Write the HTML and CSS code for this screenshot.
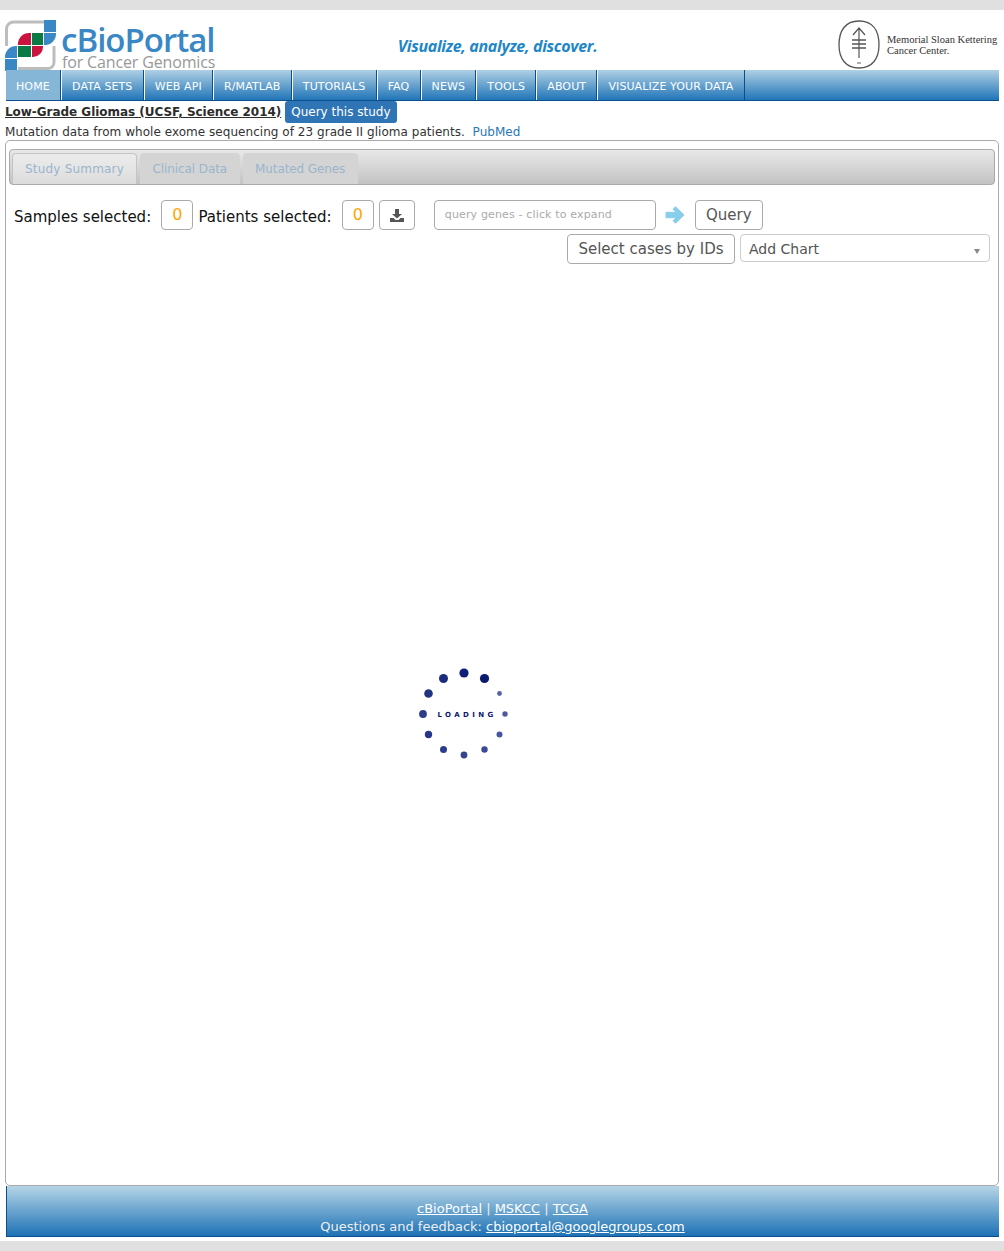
FILE: index.html
```html
<!DOCTYPE html>
<html lang="en">
<head>
    <meta charset="UTF-8">
    <meta name="viewport" content="width=device-width, initial-scale=1.0">
    <title>cBioPortal for Cancer Genomics</title>
    <link rel="stylesheet" href="styles.css">
</head>
<body>
<div class="page">
    <header class="header">
        <a class="logo" href="#">
            <svg class="logo-mark" width="52" height="52" viewBox="0 0 52 52">
                <path d="M1.5 26V9a7 7 0 0 1 7-7H39" fill="none" stroke="#bdbdbd" stroke-width="3"/>
                <path d="M13 48.500H43a6 6 0 0 0 6-6V26" fill="none" stroke="#bdbdbd" stroke-width="3"/>
                <rect x="39" y="0" width="12" height="12" fill="#3a87c6"/>
                <rect x="0" y="39" width="12" height="12" fill="#3a87c6"/>
                <path d="M39 13H51V14A11 11 0 0 1 40 25H39Z" fill="#3a87c6"/>
                <path d="M12 26V38H0V37A11 11 0 0 1 11 26Z" fill="#3a87c6"/>
                <path d="M26 13V25H13V24A11 11 0 0 1 24 13Z" fill="#c9143f"/>
                <rect x="27" y="13" width="11" height="12" fill="#0b7b45"/>
                <rect x="13" y="26" width="13" height="11" fill="#0b7b45"/>
                <path d="M27 26H38V27A10 10 0 0 1 28 37H27Z" fill="#c9143f"/>
            </svg>
            <span class="logo-text">
                <span class="logo-name">cBioPortal</span>
                <span class="logo-sub">for Cancer Genomics</span>
            </span>
        </a>
        <div class="tagline">Visualize, analyze, discover.</div>
        <div class="msk">
            <svg width="44" height="50" viewBox="0 0 44 50">
                <path d="M21 1C35 1 41 11 41 25C41 39 34 48 21 48C8 48 1 39 1 25C1 11 7 1 21 1Z" fill="#fff" stroke="#555" stroke-width="1.300"/>
                <path d="M21 8V38M15 15L21 8L27 15" fill="none" stroke="#555" stroke-width="1.200"/>
                <path d="M14 20H28M14 24H28M14 28H28" fill="none" stroke="#555" stroke-width="1.600"/>
                <path d="M19 43H23" stroke="#777" stroke-width="1.200"/>
            </svg>
            <span class="msk-text">Memorial Sloan Kettering<br>Cancer Center.</span>
        </div>
    </header>

    <nav class="nav">
        <a class="nav-item active" href="#">HOME</a>
        <a class="nav-item" href="#">DATA SETS</a>
        <a class="nav-item" href="#">WEB API</a>
        <a class="nav-item" href="#">R/MATLAB</a>
        <a class="nav-item" href="#">TUTORIALS</a>
        <a class="nav-item" href="#">FAQ</a>
        <a class="nav-item" href="#">NEWS</a>
        <a class="nav-item" href="#">TOOLS</a>
        <a class="nav-item" href="#">ABOUT</a>
        <a class="nav-item" href="#">VISUALIZE YOUR DATA</a>
    </nav>

    <div class="study-title">
        <a class="study-name" href="#">Low-Grade Gliomas (UCSF, Science 2014)</a>
        <a class="query-study" href="#">Query this study</a>
    </div>
    <div class="study-desc">Mutation data from whole exome sequencing of 23 grade II glioma patients.&nbsp; <a href="#">PubMed</a></div>

    <main class="panel">
        <ul class="tabs">
            <li class="tab active">Study Summary</li>
            <li class="tab">Clinical Data</li>
            <li class="tab">Mutated Genes</li>
        </ul>

        <div class="toolbar">
            <span class="count-label">Samples selected:</span>
            <span class="btn count">0</span>
            <span class="count-label patients">Patients selected:</span>
            <span class="btn count">0</span>
            <span class="btn download">
                <svg width="14" height="13" viewBox="0 0 14 13">
                    <path d="M5 0H9V5H12L7 9.5L2 5H5Z" fill="#555"/>
                    <path d="M0 9H3.5L5.5 11H8.5L10.5 9H14V13H0Z" fill="#555"/>
                </svg>
            </span>
            <span class="gene-input">query genes - click to expand</span>
            <svg class="go-arrow" width="20" height="18" viewBox="0 0 20 18">
                <path d="M10.500 0.800L19 9L10.500 17.200L8 14.700L11.500 11.700H1V6.300H11.500L8 3.300Z" fill="#87ceeb" stroke="#87ceeb" stroke-linejoin="round"/>
            </svg>
            <span class="btn query">Query</span>
        </div>

        <div class="toolbar-2">
            <span class="btn select-ids">Select cases by IDs</span>
            <div class="add-chart">Add Chart<i class="caret"></i></div>
        </div>

        <svg class="loading" width="100" height="100" viewBox="0 0 100 100">
            <circle cx="50" cy="9" r="4.600" fill="#0d1f78"/>
            <circle cx="70.500" cy="14.500" r="4.600" fill="#0a1a70"/>
            <circle cx="85.500" cy="29.500" r="2.400" fill="#5562a8"/>
            <circle cx="91" cy="50" r="2.700" fill="#4c5aa4"/>
            <circle cx="85.500" cy="70.500" r="3" fill="#46559f"/>
            <circle cx="70.500" cy="85.500" r="3.200" fill="#3a4a98"/>
            <circle cx="50" cy="91" r="3.400" fill="#34448f"/>
            <circle cx="29.500" cy="85.500" r="3.500" fill="#2d3d8e"/>
            <circle cx="14.500" cy="70.500" r="3.700" fill="#26378a"/>
            <circle cx="9" cy="50" r="3.900" fill="#2b3c8c"/>
            <circle cx="14.500" cy="29.500" r="4.300" fill="#22337f"/>
            <circle cx="29.500" cy="14.500" r="4.500" fill="#1c2c7c"/>
            <text class="loading-text" x="53" y="52.500" text-anchor="middle">LOADING</text>
        </svg>
    </main>

    <footer class="footer">
        <div><a href="#">cBioPortal</a> | <a href="#">MSKCC</a> | <a href="#">TCGA</a></div>
        <div>Questions and feedback: <a href="#">cbioportal@googlegroups.com</a></div>
    </footer>
</div>
</body>
</html>
```

FILE: styles.css
```css
body {
    font-family: "DejaVu Sans", sans-serif;
    font-size: 12px;
    color: #333;
    background-color: #e0e0e0;
    margin: 0;
    padding: 10px 0 0;
}
a {
    color: inherit;
}
.page {
    height: 1231px;
    padding: 0 5px;
    background-color: #fff;
    box-sizing: border-box;
}

/* header */
.header {
    display: flex;
    justify-content: space-between;
    height: 60px;
}
.logo {
    display: flex;
    width: 240px;
    padding-top: 10px;
    text-decoration: none;
}
.logo-mark {
    flex: none;
}
.logo-text {
    display: flex;
    flex-direction: column;
    margin-left: 4px;
}
.logo-name {
    font-family: "Open Sans", sans-serif;
    font-size: 33px;
    font-weight: 600;
    line-height: 39px;
    letter-spacing: -1px;
    color: #3a87c6;
}
.logo-sub {
    margin: -4px 0 0 1px;
    font-family: "Open Sans", sans-serif;
    font-size: 16px;
    line-height: 15px;
    letter-spacing: -0.15px;
    color: #989898;
}
.tagline {
    margin: 25px 0 0 -88px;
    font-family: "Open Sans", sans-serif;
    font-size: 16px;
    font-weight: 700;
    font-style: italic;
    letter-spacing: -0.33px;
    color: #1f86c7;
}
.msk {
    display: flex;
    align-items: flex-start;
    width: 161px;
    padding-top: 10px;
}
.msk-text {
    margin: 14px 0 0 5px;
    font-family: "Liberation Serif", serif;
    font-size: 10.500px;
    line-height: 11px;
    white-space: nowrap;
    color: #333;
}

/* nav */
.nav {
    display: flex;
    height: 31px;
    margin-left: 1px;
    box-sizing: border-box;
    border-bottom: 1px solid #0c4f8f;
    background: linear-gradient(#afd0e4, #2175b8);
}
.nav-item {
    display: block;
    padding: 0 10.300px 0 10px;
    border-right: 1px solid #0c4f8f;
    box-shadow: 1px 0 0 #fff;
    margin-right: 1px;
    font-size: 11px;
    letter-spacing: 0.1px;
    line-height: 33px;
    color: #fff;
    text-decoration: none;
    white-space: nowrap;
}
.nav-item.active {
    background: #85b6d8;
}
.nav-item:last-child {
    box-shadow: none;
}

/* study heading */
.study-title {
    display: flex;
    gap: 4px;
    align-items: flex-start;
    height: 23px;
}
.study-name {
    font-weight: bold;
    letter-spacing: -0.04px;
    line-height: 22px;
    color: #2c2c2c;
}
.query-study {
    padding: 0 6px;
    border-radius: 3px;
    background-color: #2f75b5;
    color: #fff;
    line-height: 22px;
    text-decoration: none;
}
.study-desc {
    height: 16px;
    line-height: 16px;
    letter-spacing: 0.04px;
}
.study-desc a {
    color: #2a78b8;
    text-decoration: none;
}

/* main panel */
.panel {
    position: relative;
    height: 1046px;
    padding: 8px 3px 0;
    box-sizing: border-box;
    border: 1px solid #aaa;
    border-radius: 5px;
}
.tabs {
    display: flex;
    gap: 3px;
    height: 36px;
    margin: 0;
    padding: 3px 0 0 2px;
    box-sizing: border-box;
    list-style: none;
    border: 1px solid #aaa;
    border-radius: 4px;
    background: linear-gradient(#e8e8e8, #c3c3c3);
}
.tab {
    padding: 0 12.500px;
    border-radius: 4px 4px 0 0;
    background-color: #d4d4d4;
    color: #9ab5cd;
    letter-spacing: -0.1px;
    line-height: 32px;
}
.tab.active {
    padding: 0 12px;
    border: 1px solid #c4c4c4;
    border-bottom: 0;
    background: linear-gradient(#ececec, #dcdcdc);
    letter-spacing: 0.2px;
    line-height: 30px;
}

.btn {
    display: block;
    box-sizing: border-box;
    height: 30px;
    border: 1px solid #aaa;
    border-radius: 4px;
    background-color: #fff;
    font-size: 15px;
    line-height: 28px;
    text-align: center;
    color: #555;
}
.toolbar {
    display: flex;
    align-items: flex-start;
    height: 30px;
    margin-top: 15px;
    padding-left: 5px;
}
.count-label {
    margin-right: 10.200px;
    font-size: 15px;
    line-height: 35px;
    color: #111;
}
.count-label.patients {
    margin-left: 5px;
}
.count {
    width: 32px;
    font-size: 16px;
    line-height: 27px;
    color: #ffa500;
}
.download {
    display: flex;
    align-items: center;
    justify-content: center;
    width: 36px;
    margin-left: 5px;
}
.gene-input {
    box-sizing: border-box;
    width: 222px;
    height: 30px;
    margin-left: 19px;
    padding-left: 10px;
    border: 1px solid #aaa;
    border-radius: 4px;
    font-size: 11px;
    letter-spacing: 0.15px;
    line-height: 27px;
    color: #aaa;
}
.go-arrow {
    margin: 6px 0 0 9px;
}
.query {
    width: 68px;
    margin-left: 10px;
}
.toolbar-2 {
    display: flex;
    justify-content: flex-end;
    gap: 5px;
    margin-top: 4px;
    padding-right: 5px;
}
.select-ids {
    width: 168px;
}
.add-chart {
    position: relative;
    box-sizing: border-box;
    width: 250px;
    height: 28px;
    padding-left: 8px;
    border: 1px solid #ccc;
    border-radius: 4px;
    font-size: 14px;
    line-height: 28px;
    color: #555;
}
.caret {
    position: absolute;
    right: 9px;
    top: 14px;
    border: 3px solid transparent;
    border-top: 5px solid #888;
}
.loading {
    position: absolute;
    left: 408px;
    top: 523px;
}
.loading-text {
    font-family: "DejaVu Sans", sans-serif;
    font-size: 7px;
    font-weight: bold;
    letter-spacing: 3.400px;
    fill: #0a1670;
}

/* footer */
.footer {
    height: 51px;
    margin-left: 1px;
    padding: 14px 1px 0 0;
    box-sizing: border-box;
    border-left: 1px solid #0c4f8f;
    border-bottom: 1px solid #0c4f8f;
    background: linear-gradient(#b5d5e6, #1e72b6);
    color: #eee;
    font-size: 13px;
    line-height: 18px;
    text-align: center;
}
.footer a {
    color: #fff;
}
```
